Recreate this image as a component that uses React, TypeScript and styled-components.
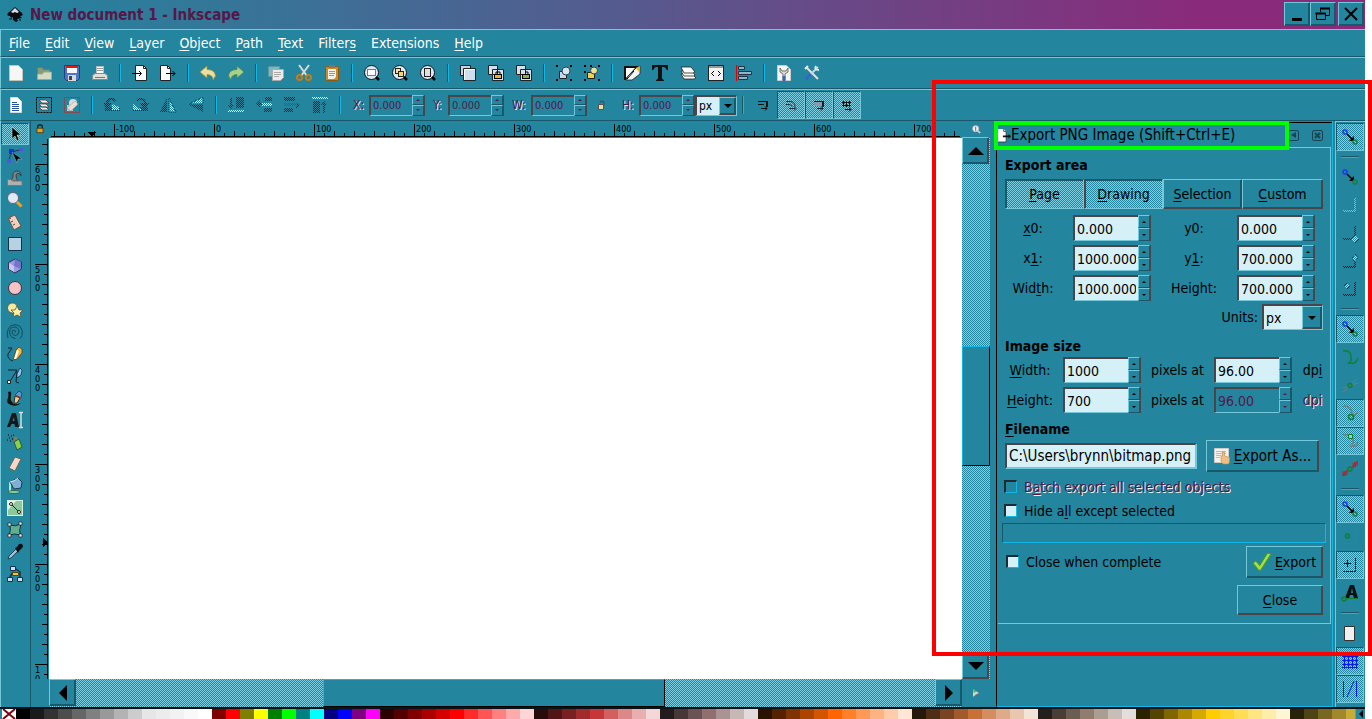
import React, { useId, useLayoutEffect, useRef, useState } from 'react';
import type { ReactNode } from 'react';
import styled, { createGlobalStyle, css } from 'styled-components';

const c = {
  base: '#23859e',
  light: '#74c8da',
  dark: '#185868',
  shade: '#48464a',
  cyan: '#16b6e4',
  field: '#d6f0f7',
  plum: '#551848',
};

const GlobalStyle = createGlobalStyle`
  *, *::before, *::after { box-sizing: border-box; }
  body {
    margin: 0;
    background: #fff;
    color: #000;
    font: 14px/18px "DejaVu Sans Condensed", "DejaVu Sans", Tahoma, sans-serif;
  }
  button, input, select { font: inherit; color: inherit; }
  button { margin: 0; padding: 0; border: 0; background: none; }
  svg { display: block; }
  u { text-decoration: underline; text-underline-offset: 2px; text-decoration-thickness: 1px; }
`;

const stipple = css`
  background: repeating-conic-gradient(${c.base} 0 25%, #7fd0e2 0 50%) 0 0 / 2px 2px;
`;
const raised = css`
  border: 1px solid;
  border-color: ${c.light} ${c.shade} ${c.shade} ${c.light};
  background: ${c.base};
  box-shadow: inset -1px -1px 0 ${c.dark};
`;
const sunken = css`
  border: 1px solid;
  border-color: ${c.dark} ${c.light} ${c.light} ${c.dark};
`;

/* ---------- icons ---------- */

const K = '#222';
const cream = '#f0e8c8';
const icons: Record<string, ReactNode> = {
  logo: (
    <>
      <path d="M8 0 1 6Q-1 9 3 9l1 2 2-1v3l3 2 2-1-1-2 5-1-2-2q4 0 2-3z" fill="#0c0c10" />
      <path d="M8 1 4 5l2 1 2-1 2 1 2-1z" fill="#d5dee6" />
      <path d="M2 12h3M12 13h2" stroke="#111" />
    </>
  ),
  page: <path d="M1.500.5h9l4 4v11h-13z" fill="#f6f6f4" stroke="#c4c4bc" />,
  folder: (
    <>
      <path d="M1.500 13.500v-11h5l1 2h6v3" fill="#8b9a74" stroke="#6f7d5c" />
      <path d="M1.500 14.500V9h5l1-2h8v7.500z" fill="#d5dbc4" stroke="#9caa86" />
    </>
  ),
  save: (
    <>
      <path d="M.5.5h15v13l-2 2h-11l-2-2z" fill="#4a76c4" stroke="#24407c" />
      <path d="M3 1h10v7H3z" fill="#f7f7f7" />
      <path d="M2 1h12v2H2z" fill="#e01818" />
      <path d="M4 10h8v6H4z" fill="#d8d8d8" />
      <path d="M5 11h3v4H5z" fill="#345" />
    </>
  ),
  print: (
    <>
      <path d="M4.500 8V1.500h7V8" fill="#fafafa" stroke="#bbb" />
      <path d="M5 3.500h6M5 5.500h6" stroke="#999" />
      <path d="M.5 10.500 3 8.500h10l2.500 2v4H.5z" fill="#dededa" stroke="#8a8a86" />
      <path d="M3 12.500h10" stroke="#777" />
    </>
  ),
  importDoc: (
    <>
      <path d="M3.500.5h8l3 3v12h-11z" fill="#fff" stroke={K} />
      <path d="M11.500.5v3h3" fill="none" stroke={K} />
      <path d="M0 8.500h9M7 6l2.500 2.500L7 11" fill="none" stroke="#000" />
    </>
  ),
  exportDoc: (
    <>
      <path d="M.5.5h7l3 3v12H.5z" fill="#fff" stroke={K} />
      <path d="M7.500.5v3h3" fill="none" stroke={K} />
      <path d="M6 8.500h9M12.500 6 15 8.500 12.500 11" fill="none" stroke="#000" />
    </>
  ),
  dockExport: (
    <>
      <path d="M0 0h7l3 3v13H0z" fill="#fff" />
      <path d="M7 0v3h3v13H0" fill="none" stroke="#333" />
      <path d="M6 8h7v-2l3 3-3 3v-2H6z" fill="#111" />
    </>
  ),
  undo: <path d="M0 7 7 1v3.500q8 0 8.500 6.500L13 15q.5-5-6-5.500V13z" fill="#eadf9c" stroke="#a09040" strokeWidth=".8" />,
  redo: <path d="M16 7 9 1v3.500q-8 0-8.500 6.500L3 15q-.5-5 6-5.500V13z" fill="#a9cf8c" stroke="#4f8a4a" strokeWidth=".8" />,
  copy: (
    <>
      <path d="M.5 1.500h11v10H.5z" fill="#7fb6c0" stroke="#5a97a4" />
      <path d="M4.500 4.500h11v8l-3 3h-8z" fill="#ecebe6" stroke="#aaa" />
      <path d="M6 7.500h7M6 9.500h7M6 11.500h5" stroke="#aaa" />
    </>
  ),
  cut: (
    <>
      <path d="M3 0 11 11M13 0 5 11" stroke="#d9d9d6" strokeWidth="2" />
      <circle cx="3.500" cy="12.500" r="2.500" fill="none" stroke="#c77b10" strokeWidth="2" />
      <circle cx="12.500" cy="12.500" r="2.500" fill="none" stroke="#c77b10" strokeWidth="2" />
    </>
  ),
  paste: (
    <>
      <rect x="1.500" y="1.500" width="13" height="14" rx="1" fill="#c88a28" stroke="#8a5a10" />
      <path d="M4 4h8v8l-2 2H4z" fill="#f1f1ec" />
      <path d="M5 6.500h6M5 8.500h6M5 10.500h5" stroke="#999" />
      <path d="M5 0h6v3H5z" fill="#777" />
    </>
  ),
  zoomSel: (
    <>
      <circle cx="7.500" cy="7.500" r="7" fill="#dfe9f3" stroke="#111" />
      <path d="M12 12l3 3" stroke="#000" strokeWidth="2.500" />
      <rect x="3.500" y="4.500" width="8" height="6" fill="#fff" stroke="#000" strokeDasharray="1 1" />
    </>
  ),
  zoomDraw: (
    <>
      <circle cx="7.500" cy="7.500" r="7" fill="#dfe9f3" stroke="#111" />
      <path d="M12 12l3 3" stroke="#000" strokeWidth="2.500" />
      <rect x="3.500" y="3.500" width="5" height="5" fill="#f6e6a0" stroke={K} />
      <rect x="6.500" y="6.500" width="5" height="5" fill="#f6d66a" stroke={K} />
    </>
  ),
  zoomPage: (
    <>
      <circle cx="7.500" cy="7.500" r="7" fill="#dfe9f3" stroke="#111" />
      <path d="M12 12l3 3" stroke="#000" strokeWidth="2.500" />
      <rect x="4.500" y="3.500" width="6" height="8" fill="#e0e0e0" stroke={K} />
    </>
  ),
  dup: (
    <>
      <path d="M.5.5h10v10H.5z" fill="#c6d4e4" stroke={K} />
      <path d="M3.500 3.500h12v12h-12z" fill="#cfddec" stroke={K} />
      <path d="M4.500 15V4.500H15" fill="none" stroke="#fff" />
    </>
  ),
  clone: (
    <>
      <path d="M.5.5h9v9h-9zM4.500 4.500h11v11h-11z" fill="#d5e0ec" stroke={K} />
      <rect x="6.500" y="9.500" width="7" height="4" fill="#f0b030" stroke="#000" />
      <path d="M8 9V7h4v2" fill="none" stroke="#000" />
    </>
  ),
  unclone: (
    <>
      <path d="M.5.5h9v9h-9zM4.500 4.500h11v11h-11z" fill="#d5e0ec" stroke={K} />
      <rect x="6.500" y="9.500" width="7" height="4" fill="#8ab04a" stroke="#000" />
      <path d="M9 7h3v2" fill="none" stroke="#000" />
    </>
  ),
  group: (
    <>
      <path d="M0 0h2v2H0zM14 0h2v2h-2zM0 14h2v2H0zM14 14h2v2h-2z" />
      <path d="M3.500 6.500h7v7h-7z" fill="#c8d8ea" stroke={K} />
      <circle cx="10" cy="6" r="4" fill="#d8e4f0" stroke="#345" />
    </>
  ),
  ungroup: (
    <>
      <path d="M0 0h2v2H0zM14 0h2v2h-2zM0 14h2v2H0zM14 14h2v2h-2zM0 6h2v2H0zM6 0h2v2H6z" />
      <path d="M3.500 7.500h7v6h-7z" fill="#f2d24a" stroke={K} />
      <circle cx="10" cy="5.500" r="3.500" fill="#eadf9c" stroke="#345" />
    </>
  ),
  fill: (
    <>
      <path d="M0 1h16L5 15H0z" fill="#111" />
      <path d="M2 3h9L2 13z" fill="#fff" />
      <path d="M16 1v8l-8 6H2l2-4 8-8z" fill="#f4f4f4" stroke="#222" strokeWidth=".8" />
      <path d="M12 3l3 4 1-6z" fill="#f0b020" />
      <path d="M3 14l7-8" stroke="#000" />
    </>
  ),
  text: <path d="M0 0h16v5h-1.500Q14 2 11 2h-1v11q0 1.500 2 2v1H4v-1q2-.5 2-2V2H5Q2 2 1.500 5H0z" fill="#111" />,
  layers: (
    <>
      <path d="M1 9h11l4 4-2 1H4z" fill="#fff" stroke={K} strokeWidth=".8" />
      <path d="M1 6h11l3 4-1 1H4z" fill="#fff" stroke={K} strokeWidth=".8" />
      <path d="M1 2h10l4 5-2 1H4z" fill="#fff" stroke={K} strokeWidth=".8" />
    </>
  ),
  xml: (
    <>
      <rect x=".5" y=".5" width="15" height="15" fill="#f2f2f2" stroke={K} />
      <path d="M1 2h14" stroke="#999" strokeWidth="2" />
      <path d="M6 6 3.500 8.500 6 11M10 6l2.500 2.500L10 11" fill="none" stroke="#000" />
    </>
  ),
  align: (
    <>
      <path d="M.5 0v16" stroke="#e00000" />
      <path d="M2.500 1.500h6v3h-6zM2.500 6.500h13v3h-13zM2.500 11.500h9v3h-9z" fill="#8fb4cc" stroke="#234" />
    </>
  ),
  prefsDoc: (
    <>
      <path d="M1.500.5h9l4 4v11h-13z" fill="#f6f6f4" stroke="#ccc" />
      <path d="M4 3v4l3 2v6h2V9l3-2V3l-2 3H6z" fill="#ddd" stroke="#555" strokeWidth=".8" />
      <path d="M6.500 11h3v5h-3z" fill="#3a66b8" />
    </>
  ),
  prefs: (
    <>
      <path d="M2 2l12 12" stroke="#e2e2de" strokeWidth="2" />
      <path d="M14 2 3 13" stroke="#c9d3de" strokeWidth="2" />
      <path d="M1 4l3-3M12 1q-2 4 3 4" stroke="#e8e8e4" strokeWidth="2" fill="none" />
      <path d="M7 9 2 14" stroke="#2f68c4" strokeWidth="3" />
    </>
  ),
  selAll: (
    <>
      <path d="M2.500.5h7l4 4v11h-11z" fill="#fff" stroke="#cdd" />
      <path d="M4 5.500h5M4 7.500h7M4 9.500h7M4 11.500h7M4 13.500h7" stroke="#2a50a0" />
    </>
  ),
  selLayers: (
    <>
      <rect x=".5" y=".5" width="15" height="15" fill="none" stroke="#000" strokeDasharray="2 1" />
      <path d="M3 3h7l3 3H6zM3 7h7l3 3H6zM3 10h7l3 3H6z" fill="#f0f0f0" stroke="#444" strokeWidth=".8" />
    </>
  ),
  deselect: (
    <>
      <rect x=".5" y=".5" width="15" height="15" fill="none" stroke="#a33" strokeDasharray="2 1" />
      <path d="M3 8h6v6H3z" fill="#b8c8d8" />
      <circle cx="9" cy="6" r="4" fill="#d5dce2" />
      <path d="M3 11l8-7 3 3-7 7z" fill="#f0dccc" stroke="#998" strokeWidth=".5" />
    </>
  ),
  rotL: (
    <>
      <path d="M3 10V5q2-4 6-3l2 2M1 7h5l-3 4z" fill="none" stroke="#111" strokeWidth="2" />
      <path d="M0 14h16v-4H2z" fill="#222" />
      <path d="M8 13V7l7 3v3z" fill={cream} />
    </>
  ),
  rotR: (
    <>
      <path d="M13 10V5q-2-4-6-3L5 4M10 7h5l-3 4z" fill="none" stroke="#111" strokeWidth="2" />
      <path d="M0 14h16v-4H2z" fill="#222" />
      <path d="M1 13V7l9 6z" fill={cream} />
    </>
  ),
  flipH: (
    <>
      <path d="M7 1v14H0z" fill="#222" />
      <path d="M9 1v14h7z" fill={cream} stroke="#222" />
    </>
  ),
  flipV: (
    <>
      <path d="M15 0v7H1z" fill={cream} stroke="#222" />
      <path d="M15 15V8H1z" fill="#222" />
    </>
  ),
  toBottom: (
    <>
      <path d="M8 0h8v11H8zM2 1h2v8H2zM0 8h6l-3 4z" fill="#222" />
      <path d="M0 13h16v2H0z" fill={cream} />
    </>
  ),
  lower: (
    <>
      <path d="M9 0h7v4H9zM8 11h8v4H8zM3 6h6v2H3zM4 3v8L0 7z" fill="#222" />
      <path d="M6 6h10v3H6z" fill={cream} />
    </>
  ),
  raise: (
    <>
      <path d="M0 0h11v4H0zM0 11h9v4H0zM12 5l4 3-4 4z" fill="#222" />
      <path d="M0 6h13v3H0z" fill="#556" />
    </>
  ),
  toTop: (
    <>
      <path d="M1 4h7v12H1zM11 6h2v10h-2zM9 8l3-4 3 4z" fill="#222" />
      <path d="M0 0h16v2H0z" fill={cream} />
    </>
  ),
  lockOpen: (
    <>
      <path d="M7 6q0-2 2-2t2 2v2" fill="none" stroke="#444" />
      <rect x="5.500" y="7.500" width="5" height="5" fill="#e8e0a0" stroke="#555" />
    </>
  ),
  lock: (
    <>
      <path d="M5 7V5q0-2.500 3-2.500T11 5v2" fill="none" stroke="#111" strokeWidth="1.500" />
      <rect x="4" y="7" width="8" height="6" fill="#e8a41c" stroke="#4a3000" />
    </>
  ),
  stroke: (
    <>
      <path d="M3 4.500h9M3 7.500h6M6 11.500h6M10 9.500l2 2-2 2" fill="none" stroke="#111" />
      <path d="M12 4v6" stroke="#111" strokeWidth="2" />
    </>
  ),
  corner: <path d="M3 4.500h4q5 0 5 5M3 7.500h3q2 0 3 2M6 11.500h6M11 9.500l2 2-2 2" fill="none" stroke="#234" />,
  gradMove: (
    <>
      <path d="M3 5h8v4H3z" fill="#8a9aa8" />
      <path d="M3 4.500h9M6 11.500h6M10 9.500l2 2-2 2" fill="none" stroke="#123" />
      <path d="M12 4v6" stroke="#123" strokeWidth="2" />
    </>
  ),
  pattMove: <path d="M3 5.500h9M3 8.500h9M4.500 4v6M7.500 4v6M10.500 4v6M6 12.500h6M10 10.500l2 2-2 2" fill="none" stroke="#111" />,
  arrow: <path d="M5 1v12l3-3 2 5 2-1-2-5h4z" fill="#000" stroke="#cfe" strokeWidth=".5" />,
  node: (
    <>
      <path d="M2 12Q3 2 14 2" fill="none" stroke="#235" />
      <path d="M0 11h4v4H0zM12 0h4v3h-4z" fill="#4a58d8" />
      <path d="M2 1h5v5H2z" fill="#1030e0" />
      <path d="M5 4l10 7-4 0-1 4z" fill="#000" stroke="#9bd" strokeWidth=".5" />
    </>
  ),
  tweak: (
    <>
      <path d="M1 11q4 0 5-4-1-6 4-6 4 0 4 5l-1-2q-3-2-4 1 0 4 2 6z" fill="#7c8488" stroke="#333" strokeWidth=".8" />
      <path d="M.5 9.500h3L6 11h9v4.500H.5z" fill="#b0b0b0" stroke="#777" />
    </>
  ),
  zoom: (
    <>
      <path d="M9.500 9.500l5 5" stroke="#f0a020" strokeWidth="3" />
      <circle cx="6" cy="6" r="5.500" fill="#dfeaf6" stroke="#667" />
    </>
  ),
  magnifier: (
    <>
      <path d="M9.500 9.500l5 5" stroke="#c8c8c8" strokeWidth="3" />
      <circle cx="6.500" cy="6.500" r="5.500" fill="#f4f4f4" stroke="#aab" />
      <path d="M6.500 3v7" stroke="#678" strokeWidth="2" />
    </>
  ),
  measure: (
    <>
      <path d="M1 4l7-3 6 11-7 4z" fill="#f2cfc0" stroke="#654" />
      <path d="M2 5l2-1M4 8l2-1M6 11l2-1" stroke="#543" />
    </>
  ),
  rect: <rect x="1.500" y="1.500" width="13" height="13" fill="#b8d0e4" stroke="#134" />,
  box: (
    <>
      <path d="M1.500 4.500 8 1l6.500 3v7L8 15l-6.500-4z" fill="#9a9ae0" stroke="#335" />
      <path d="M2 5l5 3v6l-5-3z" fill="#c8c8f4" />
      <path d="M8 1 7 8l7 3V4z" fill="#7474cc" />
    </>
  ),
  circle: <circle cx="8" cy="8" r="6.500" fill="#f9c2c6" stroke="#433" />,
  star: (
    <>
      <circle cx="5.500" cy="6" r="5" fill="#f6eaa0" stroke="#554" strokeWidth=".8" />
      <path d="M10 4l2 4h4l-3 3 1 4-4-2-4 2 1-4-3-3h4z" fill="#fbf1a8" stroke="#554" strokeWidth=".8" />
    </>
  ),
  spiral: (
    <path
      d="M8 8.500q1.500-1.500-.5-2.500-3 0-2.500 3 1 2.500 3.500 2.500 3.500-.5 3.500-4Q11 3 7.500 3 3 3 2.500 8 3 14 8.500 14.500M1 14Q-1 7 3 2.500 8-1 13 2.500q3.500 4 2 9L13 14.500"
      fill="none"
      stroke="#124a5a"
    />
  ),
  pencil: (
    <>
      <path d="M1 2h4L1 8q-1 5 5 7" fill="none" stroke="#123" />
      <path d="M7 11 9 4l3-3 3 2 0 4-5 6-3 1z" fill="#f6b63a" stroke="#542" strokeWidth=".8" />
      <path d="M7 13l3-9 2 1-3 8z" fill="#fff" />
    </>
  ),
  pen: (
    <>
      <path d="M1 2h9L4 12q-2 3-3 0M10 3 9 14l3 1" fill="none" stroke="#123" />
      <path d="M10 6l3-6 2 2-1 5-4 3z" fill="#8fc8e8" stroke="#124" strokeWidth=".7" />
      <path d="M.5 12.500h3v3h-3z" fill="#fff" stroke="#222" />
    </>
  ),
  calli: (
    <>
      <path d="M1 2q4-2 3 3t1 7q2 4 9 1-4 4-10 2T1 8Q2 5 1 2z" fill="#111" />
      <path d="M7 13 8 6l5 2-3 5z" fill="#f0d080" stroke="#111" strokeWidth=".8" />
      <path d="M8 5l4-4 3 2-1 5z" fill="#5a9ac8" stroke="#124" strokeWidth=".6" />
      <path d="M8 5l6 3" stroke="#d22" />
    </>
  ),
  textTool: (
    <>
      <path d="M5 1h4l3 14H8l-.5-3h-3L3 15H0zM5.500 9h2L7 5z" fill="#181818" />
      <path d="M12 .5h4M12 15.500h4M14 1v14" stroke="#ddd" strokeWidth="1.500" />
    </>
  ),
  spray: (
    <>
      <path d="M1 1h1M4 2h1M2 4h1M5 5h1M0 6h1M6 1h1M3 7h1" stroke="#123" strokeWidth="1.500" />
      <path d="M7 8l5-3 3 8-5 3z" fill="#8cd04a" stroke="#243" strokeWidth=".8" />
      <path d="M7 7V3l3 0 1 2z" fill="#8a7a50" />
    </>
  ),
  eraser: <path d="M8 1l6 2-6 12-6-3z" fill="#f6d8c8" stroke="#665" />,
  bucket: (
    <>
      <path d="M3 4v9" stroke="#9cf0c8" strokeWidth="2" />
      <ellipse cx="7" cy="14" rx="6" ry="1.500" fill="#8bd0a0" stroke="#243" strokeWidth=".6" />
      <path d="M3 4l8-4 4 4-1 6-7 1z" fill="#7fb0d4" stroke="#124" strokeWidth=".8" />
      <path d="M3 4q5-1 8-4" fill="none" stroke="#def" />
    </>
  ),
  gradient: (
    <>
      <rect x=".5" y=".5" width="15" height="15" fill="#8cc89c" stroke="#d8f0d8" />
      <path d="M1 1h8L1 10z" fill="#e8f6e8" />
      <path d="M4 4l8 8" stroke="#222" />
      <circle cx="4" cy="4" r="1.500" fill="#fff" stroke="#222" />
      <circle cx="12" cy="12" r="1.500" fill="#fff" stroke="#222" />
    </>
  ),
  mesh: (
    <>
      <path d="M3 3q5 2 11-1-2 6-1 11-5-2-11 0 2-4 1-10z" fill="#5fae8c" stroke="#134" />
      <path d="M1 1h3v3H1zM12 0h3v3h-3zM1 12h3v3H1zM12 12h3v3h-3z" fill="#eee" stroke="#222" strokeWidth=".7" />
    </>
  ),
  dropper: (
    <>
      <path d="M1 15l1-3 7-7 2 2-7 7z" fill="#9cc4dc" stroke="#123" strokeWidth=".7" />
      <path d="M8 4l2-1 2-3q4-1 4 3l-4 4-1 2z" fill="#111" />
    </>
  ),
  connector: (
    <>
      <path d="M6 6 3 11M9 3l4 3v5" stroke="#134" strokeWidth="1.500" fill="none" />
      <path d="M3.500.5h5v4h-5zM.5 11.500h5v4h-5zM10.500 11.500h5v4h-5z" fill="#cfe0ee" stroke="#135" />
      <path d="M5.500 6.500h6v3h-6z" fill="#f4c430" stroke="#542" />
    </>
  ),
  snap: (
    <>
      <path d="M5 5l5 5" stroke="#000" strokeWidth="1.500" />
      <path d="M12 7v5H7z" fill="#000" />
      <circle cx="3" cy="3" r="2" fill="none" stroke="#1a3af0" strokeWidth="1.500" />
      <circle cx="13" cy="13" r="2" fill="none" stroke="#128040" strokeWidth="1.500" />
    </>
  ),
  bbox: <path d="M13 1v13H1" fill="none" stroke="#b0b07c" strokeWidth="2" />,
  bboxEdge: (
    <>
      <path d="M13 1v13H1" fill="none" stroke="#222" strokeWidth="2" />
      <path d="M13 10l4 4-4 4-4-4z" fill="#d8d8a0" stroke="#222" />
    </>
  ),
  bboxMid: (
    <>
      <path d="M13 1v13H1" fill="none" stroke="#111" strokeWidth="2" />
      <path d="M13 1l3 4-3 4-3-4z" fill="#c8d8a0" stroke="#222" />
    </>
  ),
  bboxCtr: (
    <>
      <path d="M13 1v13H1" fill="none" stroke="#111" strokeWidth="2" />
      <path d="M5 2l3 3-3 3-3-3z" fill="#c8d8a0" stroke="#222" />
    </>
  ),
  curve: <path d="M1 2q7-1 8 5t-2 7q7 2 9-5" fill="none" stroke="#128030" strokeWidth="1.500" />,
  cross: (
    <>
      <path d="M1 15 15 2M1 11l15-5" stroke="#6f7d7c" />
      <circle cx="8" cy="8.500" r="2" fill={c.base} stroke="#128030" strokeWidth="1.500" />
    </>
  ),
  cusp: (
    <>
      <path d="M1 1q9-1 9 9 3 2 5-3" fill="none" stroke="#6f8080" strokeWidth="1.500" />
      <circle cx="9" cy="12" r="2.500" fill="none" stroke="#128030" strokeWidth="1.500" />
    </>
  ),
  smooth: (
    <>
      <path d="M1 2q9-1 10 4t-2 7q6 1 7-4" fill="none" stroke="#6f8080" strokeWidth="1.500" />
      <path d="M6.500 1.500h4v4h-4z" fill="#7fd0e2" stroke="#128030" />
    </>
  ),
  midline: (
    <>
      <path d="M1 10v5l2-5v5l2-6v5M11 2v5l2-6v5l2-6v5" fill="none" stroke="#b0202c" />
      <circle cx="8" cy="8" r="2" fill="none" stroke="#128030" strokeWidth="1.500" />
    </>
  ),
  objCtr: (
    <>
      <path d="M13.500 3v11.500H1" fill="none" stroke="#6a6f74" />
      <circle cx="5.500" cy="7" r="2" fill="none" stroke="#128030" strokeWidth="1.500" />
    </>
  ),
  rotCtr: (
    <>
      <path d="M5.500 3v7M2 6.500h7" stroke="#111" />
      <path d="M13.500 1v13.500H1" fill="none" stroke="#111" strokeDasharray="3 1" />
    </>
  ),
  textSnap: (
    <>
      <path d="M8 0h4l4 13h-4l-1-3H8l-1 3H3zM9 8h2l-1-5z" fill="#111" />
      <path d="M4 13.500h12" stroke="#128030" />
      <circle cx="2" cy="14" r="2" fill="none" stroke="#128030" strokeWidth="1.500" />
    </>
  ),
  pageSnap: <path d="M2.500 1.500h10v14h-10z" fill="#f0f0f0" stroke="#333" />,
  gridSnap: <path d="M0 3.500h16M0 7.500h16M0 11.500h16M2.500 0v16M6.500 0v16M10.500 0v16M14.500 0v16M0 14.500h16" stroke="#0818f0" />,
  guideSnap: <path d="M1.500 0v16M14.500 0v16M5 16l7-16" stroke="#0818f0" />,
  cms: (
    <>
      <path d="M4 3l8 5-8 5z" fill="#d8d8d0" />
      <path d="M4 3l5 3-4 2z" fill="#50b850" />
      <path d="M5 12l4-3 2 0z" fill="#c04858" />
    </>
  ),
  exportAs: (
    <>
      <path d="M.5.5h14v14H.5z" fill="#f4f2ec" stroke="#ccc" />
      <path d="M2 3.500h10M2 5.500h10M2 7.500h5M2 9.500h4" stroke="#bbb" />
      <path d="M7 9q0-2 1.500-1V4h2v4l5 1.500V14l-1 2H9l-2-3z" fill="#f0be80" stroke="#c08a48" strokeWidth=".6" />
    </>
  ),
  check: <path d="M0 9 2.500 7 6 11 13 0l3 1L7 15q-2 1-3-1z" fill="#a4e04c" stroke="#4c9a1c" strokeWidth=".9" />,
};

function Icon({ name, size = 16, faded }: { name: string; size?: number; faded?: boolean }) {
  const id = useId();
  return (
    <svg width={size} height={size} viewBox="0 0 16 16" overflow="visible" aria-hidden="true">
      {faded && (
        <defs>
          <pattern id={id + 'p'} width="2" height="2" patternUnits="userSpaceOnUse">
            <path d="M0 0h1v1H0zM1 1h1v1H1z" fill="#fff" shapeRendering="crispEdges" />
          </pattern>
          <mask id={id + 'm'}>
            <rect width="18" height="18" fill={`url(#${id}p)`} />
          </mask>
        </defs>
      )}
      <g mask={faded ? `url(#${id}m)` : undefined}>{icons[name]}</g>
    </svg>
  );
}

/** Renders a caption in which "_" marks the mnemonic letter. */
function Caption({ text }: { text: string }) {
  const at = text.indexOf('_');
  if (at < 0) return <>{text}</>;
  return (
    <span>
      {text.slice(0, at)}
      <u>{text[at + 1]}</u>
      {text.slice(at + 2)}
    </span>
  );
}

/* ---------- frame ---------- */

const Page = styled.div`
  position: relative;
  height: 100vh;
  min-height: 600px;
  overflow: hidden;
`;
const Shell = styled.div`
  display: flex;
  flex-direction: column;
  height: 100%;
  margin-right: 7px;
  background: ${c.base};
`;
const TitleBar = styled.header`
  display: flex;
  align-items: center;
  flex: none;
  height: 29px;
  padding: 0 1px 0 7px;
  gap: 7px;
  background: linear-gradient(90deg, #23859e, #565a8e 46%, #8a2a7a 88%);
`;
const Title = styled.h1`
  flex: 1;
  margin: 0;
  font-size: 15px;
  line-height: 18px;
  color: ${c.plum};
`;
const WindowButtons = styled.div`
  display: flex;
  align-self: flex-start;
  padding-top: 2px;
`;
const WindowButton = styled.button<{ $apart?: boolean }>`
  ${raised}
  display: grid;
  place-items: center;
  width: 26px;
  height: 24px;
  margin-left: ${(p) => (p.$apart ? 2 : 0)}px;
`;
const Bar = styled.div<{ $height: number }>`
  display: flex;
  align-items: center;
  flex: none;
  height: ${(p) => p.$height}px;
  padding-left: 1px;
  border: solid ${c.light};
  border-width: 1px 0 0 1px;
  border-bottom: 1px solid ${c.dark};
`;
const MenuBar = styled(Bar).attrs({ as: 'nav', $height: 28 })`
  padding-left: 8px;
  gap: 15px;
  color: #fff;
`;
const ToolButton = styled.button<{ $on?: boolean; $h?: number; $w?: number }>`
  display: grid;
  place-items: center;
  flex: none;
  width: ${(p) => p.$w ?? 28}px;
  height: ${(p) => p.$h ?? 28}px;
  ${(p) => p.$on && stipple}
  ${(p) => p.$on && sunken}
`;
const Divider = styled.span`
  flex: none;
  width: 2px;
  height: 18px;
  margin: 0 5px;
  border-left: 1px solid ${c.dark};
  border-right: 1px solid ${c.cyan};
`;

/* ---------- form parts ---------- */

const etched = css`
  color: ${c.plum};
  text-shadow: 1px 1px 0 #e8f2f4;
`;
const FieldLabel = styled.label<{ $off?: boolean; $small?: boolean }>`
  white-space: nowrap;
  ${(p) => p.$off && etched}
  ${(p) => p.$small && 'font-size: 12px;'}
`;
const SpinBox = styled.span<{ $small?: boolean }>`
  display: flex;
  flex: none;
  width: ${(p) => (p.$small ? 56 : 78)}px;
  height: ${(p) => (p.$small ? 21 : 26)}px;
`;
const Field = styled.input<{ $small?: boolean }>`
  flex: 1;
  min-width: 0;
  height: 100%;
  padding: 0 2px;
  border: solid;
  border-width: 2px 0 1px 2px;
  border-color: ${c.shade} ${c.light} ${c.light} ${c.shade};
  border-radius: 0;
  outline: 0;
  background: ${c.field};
  font-size: ${(p) => (p.$small ? 11 : 14)}px;
  &:disabled { background: transparent; color: ${c.plum}; }
`;
const PathField = styled(Field)`
  flex: none;
  width: 192px;
  height: 26px;
  border-width: 2px;
  font-size: 15px;
`;
const Steps = styled.span`
  display: flex;
  flex-direction: column;
  width: 13px;
  border-right: 1px solid ${c.shade};
`;
const Step = styled.button`
  flex: 1;
  display: grid;
  place-items: center;
  border: 1px solid;
  border-color: ${c.light} ${c.dark} ${c.dark} ${c.light};
  color: #000;
  &:disabled { color: ${c.plum}; }
`;

function Spin(p: { id: string; value: string; small?: boolean; off?: boolean }) {
  const [value, setValue] = useState(p.value);
  return (
    <SpinBox $small={p.small}>
      <Field id={p.id} value={value} disabled={p.off} $small={p.small} onChange={(e) => setValue(e.target.value)} />
      <Steps>
        <Step type="button" aria-label="Increase" disabled={p.off}>
          <svg width="4" height="2"><path d="M0 2 2 0l2 2z" fill="currentColor" /></svg>
        </Step>
        <Step type="button" aria-label="Decrease" disabled={p.off}>
          <svg width="4" height="2"><path d="M0 0h4L2 2z" fill="currentColor" /></svg>
        </Step>
      </Steps>
    </SpinBox>
  );
}

const Drop = styled.span<{ $small?: boolean }>`
  display: grid;
  grid-template-columns: 1fr ${(p) => (p.$small ? 17 : 20)}px;
  flex: none;
  width: ${(p) => (p.$small ? 42 : 61)}px;
  height: ${(p) => (p.$small ? 21 : 26)}px;
  border: solid;
  border-width: 2px 1px 1px 2px;
  border-color: ${c.shade} ${c.light} ${c.light} ${c.shade};
  background: ${c.field};
  select {
    grid-area: 1 / 1 / 2 / 3;
    appearance: none;
    width: 100%;
    padding: 0 2px;
    border: 0;
    outline: 0;
    background: transparent;
    font-size: ${(p) => (p.$small ? 12 : 14)}px;
  }
`;
const DropArrow = styled.span`
  ${raised}
  grid-area: 1 / 2 / 2 / 3;
  display: grid;
  place-items: center;
  pointer-events: none;
`;
function UnitSelect({ id, small, label }: { id: string; small?: boolean; label?: string }) {
  return (
    <Drop $small={small}>
      <select id={id} aria-label={label} defaultValue="px">
        <option>px</option>
        <option>mm</option>
        <option>in</option>
      </select>
      <DropArrow>
        <svg width="8" height="4"><path d="M0 0h8L4 4z" /></svg>
      </DropArrow>
    </Drop>
  );
}

const PushButton = styled.button<{ $w: number; $h?: number; $large?: boolean }>`
  ${raised}
  display: flex;
  align-items: center;
  justify-content: center;
  gap: 4px;
  flex: none;
  width: ${(p) => p.$w}px;
  height: ${(p) => p.$h ?? 32}px;
  font-size: ${(p) => (p.$large ? 15 : 14)}px;
  white-space: nowrap;
`;

/* ---------- workspace ---------- */

const Body = styled.main`
  display: flex;
  flex: 1;
  min-height: 0;
`;
const Toolbox = styled.div`
  flex: none;
  width: 31px;
  padding: 2px 0 0;
  border-left: 1px solid ${c.light};
  border-right: 1px solid ${c.dark};
`;
const DocumentArea = styled.section`
  display: grid;
  grid-template: 16px minmax(0, 1fr) 28px / 18px minmax(0, 1fr) 28px;
  flex: 1;
  min-width: 0;
`;
const Corner = styled.div`
  display: grid;
  place-items: center;
`;
const Ruler = styled.div`
  overflow: hidden;
  font-size: 9px;
`;
const Canvas = styled.div`
  border-top: 1px solid ${c.base};
  background: #fff;
`;
const Scroll = styled.div<{ $vertical?: boolean }>`
  display: flex;
  flex-direction: ${(p) => (p.$vertical ? 'column' : 'row')};
  ${(p) => (p.$vertical ? '' : 'grid-column: 2;')}
  ${stipple}
`;
const ScrollButton = styled.button`
  ${raised}
  display: grid;
  place-items: center;
  flex: none;
  width: 27px;
  height: 27px;
`;
const Gap = styled.div<{ $grow: number }>`
  flex: ${(p) => p.$grow} 0 0;
`;
const Thumb = styled.div<{ $grow: number }>`
  flex: ${(p) => p.$grow} 0 0;
  border: 1px solid;
  border-color: ${c.cyan} #000 #000 ${c.cyan};
  background: ${c.base};
`;

const tickLength = (n: number) => (n % 10 === 0 ? 12 : n % 2 === 0 ? 5 : 3);

function HorizontalRuler() {
  const ref = useRef<HTMLDivElement>(null);
  const [width, setWidth] = useState(0);
  useLayoutEffect(() => {
    const el = ref.current;
    if (!el) return;
    const measure = () => setWidth(el.clientWidth);
    measure();
    const observer = new ResizeObserver(measure);
    observer.observe(el);
    return () => observer.disconnect();
  }, []);
  const zero = 165;
  const first = -16;
  const count = Math.max(0, Math.floor((width - 8 - zero) / 10) - first + 1);
  const ticks = Array.from({ length: count }, (_, i) => i + first);
  return (
    <Ruler ref={ref}>
      <svg width="100%" height="16" shapeRendering="crispEdges">
        <rect x="2" y="15" width={Math.max(0, width - 4)} height="1" />
        {ticks.map((n) => (
          <rect key={n} x={zero + n * 10} y={15 - tickLength(n)} width="1" height={tickLength(n)} />
        ))}
        {ticks.filter((n) => n % 10 === 0 && zero + n * 10 < width - 20).map((n) => (
          <text key={n} x={zero + 2 + n * 10} y="11">{n * 10}</text>
        ))}
        <path d="M38 11h9l-4 5z" />
      </svg>
    </Ruler>
  );
}

function VerticalRuler() {
  const ticks = Array.from({ length: 120 }, (_, i) => i);
  return (
    <Ruler>
      <svg width="18" height="100%" shapeRendering="crispEdges">
        <path d="M16 2h1v3000h-1z" />
        {ticks.map((n) => (
          <rect key={n} x={16 - tickLength(n - 2)} y={7 + n * 10} width={tickLength(n - 2)} height="1" />
        ))}
        {[600, 500, 400, 300, 200, 100].map((v, row) =>
          String(v).split('').map((d, i) => (
            <text key={v + '-' + i} x="4" y={36 + row * 100 + i * 9}>{d}</text>
          )),
        )}
        <path d="M12 401v9l5-4z" />
      </svg>
    </Ruler>
  );
}

/* ---------- export dock ---------- */

const Dock = styled.aside`
  display: flex;
  flex-direction: column;
  flex: none;
  width: 343px;
  padding: 1px 0 0 6px;
  border-right: 1px solid ${c.cyan};
`;
const DockInner = styled.div`
  flex: 1;
  padding-left: 1px;
  border: solid #000;
  border-width: 1px 0 0 1px;
  border-bottom: 1px solid ${c.cyan};
`;
const DockHeader = styled.div`
  position: relative;
  display: flex;
  align-items: center;
  height: 24px;
  padding-right: 9px;
`;
const DockTitle = styled.h2`
  flex: 1;
  margin: 0;
  font-size: 15px;
  font-weight: normal;
`;
const DockButton = styled.button`
  display: grid;
  place-items: center;
  width: 11px;
  height: 11px;
  margin-left: 13px;
  border: 1px solid #1a4450;
  border-radius: 2px;
`;
const DockForm = styled.form`
  display: flex;
  flex-direction: column;
  height: 477px;
  margin-right: 1px;
  padding: 8px 7px 0;
  border: 1px solid ${c.light};
  border-left: 0;
`;
const Heading = styled.h3<{ $top?: number }>`
  margin: ${(p) => p.$top ?? 0}px 0 0;
  font-size: 14px;
  line-height: 18px;
`;
const AreaTabs = styled.div`
  display: grid;
  grid-template-columns: 79px 79px 79px 81px;
  height: 30px;
  margin: 5px 0 6px;
`;
const AreaTab = styled.button<{ $on?: boolean }>`
  ${raised}
  ${(p) => p.$on && stipple}
  ${(p) => p.$on && css`border-color: ${c.shade} ${c.light} ${c.light} ${c.shade}; box-shadow: inset 1px 1px 0 ${c.dark};`}
`;
const AreaGrid = styled.div`
  display: grid;
  grid-template-columns: 68px 78px 86px 78px;
  row-gap: 4px;
  align-items: center;
  text-align: center;
  label:nth-of-type(odd) { padding-right: 12px; }
`;
const Row = styled.div<{ $top?: number; $gap?: number; $end?: boolean }>`
  display: flex;
  align-items: center;
  justify-content: ${(p) => (p.$end ? 'flex-end' : 'flex-start')};
  gap: ${(p) => p.$gap ?? 0}px;
  margin-top: ${(p) => p.$top ?? 0}px;
`;
const SizeGrid = styled.div`
  display: grid;
  grid-template-columns: 58px 78px 73px 78px 1fr;
  row-gap: 4px;
  align-items: center;
  margin-top: 2px;
  label { text-align: center; }
  label:first-child, label:nth-of-type(3) { padding-right: 8px; }
`;
const Unit = styled.span<{ $off?: boolean; $start?: boolean }>`
  text-align: center;
  padding-left: ${(p) => (p.$start ? 10 : 0)}px;
  white-space: nowrap;
  ${(p) => p.$off && etched}
`;
const Check = styled.label<{ $off?: boolean; $inset?: boolean }>`
  display: flex;
  align-items: center;
  gap: 7px;
  height: 24px;
  padding-left: ${(p) => (p.$inset ? 2 : 0)}px;
  ${(p) => p.$off && etched}
  input {
    appearance: none;
    width: 13px;
    height: 13px;
    margin: 0 0 2px -1px;
    border: 2px solid;
    border-width: 2px 1px 1px 2px;
    border-color: #1b2c33 ${c.cyan} ${c.cyan} #1b2c33;
    background: ${c.field};
  }
  input:disabled { background: transparent; }
`;
const Progress = styled.div`
  height: 20px;
  margin: 0 -3px;
  border: 1px solid;
  border-color: ${c.dark} ${c.cyan} ${c.cyan} ${c.dark};
`;
const Spread = styled(Row)`
  justify-content: space-between;
`;

/* ---------- snap bar and palette ---------- */

const SnapBar = styled.div`
  flex: none;
  width: 30px;
  margin-left: 2px;
  padding-top: 1px;
  border-left: 1px solid ${c.light};
  border-top: 1px solid ${c.light};
`;
const SnapDivider = styled.hr`
  width: 18px;
  height: 2px;
  margin: 5px 5px;
  border: 0;
  border-top: 1px solid ${c.dark};
  border-bottom: 1px solid ${c.cyan};
`;
const Palette = styled.div`
  display: flex;
  flex: none;
  height: 12px;
  padding-left: 2px;
  border-top: 2px solid #0a1418;
`;
const Swatches = styled.div`
  display: flex;
  flex: 1;
  min-width: 0;
  overflow: hidden;
`;
const Swatch = styled.button`
  flex: none;
  width: 14px;
  height: 10px;
`;
const PaletteMenu = styled.button`
  display: grid;
  place-items: center;
  width: 10px;
  border-left: 1px solid ${c.cyan};
`;
const RedFrame = styled.div`
  position: absolute;
  top: 80px;
  right: 0;
  width: 440px;
  height: 576px;
  border: 4px solid #f00;
  pointer-events: none;
`;
const GreenFrame = styled.div`
  position: absolute;
  top: -2px;
  left: -4px;
  width: 295px;
  height: 29px;
  border: 4px solid #0f0;
  pointer-events: none;
`;

/* ---------- data ---------- */

const menus = ['_File', '_Edit', '_View', '_Layer', '_Object', '_Path', '_Text', 'Filter_s', 'Exte_nsions', '_Help'];
const commands =
  'page folder save print | importDoc exportDoc | undo redo | copy cut paste | zoomSel zoomDraw zoomPage | dup clone unclone | group ungroup | fill text layers xml align | prefsDoc prefs'.split(' ');
const selectControls = 'selAll selLayers deselect | rotL rotR flipH flipV | toBottom lower raise toTop |'.split(' ');
const fadedNames = new Set('rotL rotR flipH flipV toBottom lower raise toTop bbox bboxEdge bboxMid bboxCtr'.split(' '));
const tools =
  'arrow node tweak zoom measure rect box circle star spiral pencil pen calli textTool spray eraser bucket gradient mesh dropper connector'.split(' ');
const snaps =
  '+snap | snap bbox bboxEdge bboxMid bboxCtr | +snap curve cross +cusp +smooth midline | +snap objCtr +rotCtr textSnap | pageSnap +gridSnap +guideSnap'.split(' ');
const swatches = (
  '000000 1a1a1a 333333 4d4d4d 666666 808080 999999 b3b3b3 cccccc e6e6e6 ececec f2f2f2 f9f9f9 ffffff ' +
  '800000 ff0000 808000 ffff00 008000 00ff00 008080 00ffff 000080 0000ff 800080 ff00ff ' +
  '2b0000 550000 800000 aa0000 d40000 ff0000 ff2a2a ff5555 ff8080 ffaaaa ffd5d5 ' +
  '280b0b 501616 782121 a02c2c c83737 d35f5f de8787 e9afaf f4d7d7 ' +
  '241c1c 483737 6c5353 916f6f ac9393 c8b7b7 e3dbdb ' +
  '2b1100 552200 803300 aa4400 d45500 ff6600 ff7f2a ff9955 ffb380 ffccaa ffe6d5 ' +
  '28170b 502d16 784421 a05a2c c87137 d38d5f deaa87 e9c6af f4e3d7 ' +
  '241f1c 483e37 6c5d53 917c6f ac9d93 c8beb7 e3dedb ' +
  '2b2200 554400 806600 aa8800 d4aa00 ffcc00 ffd42a ffdd55 ffe680 ffeeaa fff6d5 ' +
  '28220b 504416 786721 a0892c c8ab37 d3bc5f decd87'
).split(' ');

const Coordinate = styled.span<{ $w: number }>`
  display: flex;
  align-items: center;
  justify-content: space-between;
  flex: none;
  width: ${(p) => p.$w}px;
`;
const Coordinates = styled.span`
  display: flex;
  align-items: center;
  gap: 8px;
  margin-left: 7px;
`;

function TopBars() {
  return (
    <>
      <TitleBar>
        <Icon name="logo" />
        <Title>New document 1 - Inkscape</Title>
        <WindowButtons>
          <WindowButton aria-label="Minimize">
            <svg width="12" height="14"><path d="M1 11h10v3H1z" /></svg>
          </WindowButton>
          <WindowButton aria-label="Restore">
            <svg width="16" height="14" fill="none" stroke="#000">
              <path d="M5 1.500h10M.5 6.500h10" strokeWidth="2" />
              <path d="M5.500 5V1.500h9v7H11M1.500 6v6.500h9V6" />
            </svg>
          </WindowButton>
          <WindowButton aria-label="Close window" $apart>
            <svg width="14" height="14"><path d="M1 1l12 12M13 1 1 13" stroke="#000" strokeWidth="2" /></svg>
          </WindowButton>
        </WindowButtons>
      </TitleBar>
      <MenuBar>
        {menus.map((m) => (
          <button key={m}><Caption text={m} /></button>
        ))}
      </MenuBar>
      <Bar $height={32}>
        {commands.map((n, i) =>
          n === '|' ? <Divider key={i} /> : <ToolButton key={i} aria-label={n}><Icon name={n} /></ToolButton>,
        )}
      </Bar>
      <Bar $height={32}>
        {selectControls.map((n, i) =>
          n === '|' ? <Divider key={i} /> : (
            <ToolButton key={i} aria-label={n}><Icon name={n} faded={fadedNames.has(n)} /></ToolButton>
          ),
        )}
        <Coordinates>
          <Coordinate $w={72}>
            <FieldLabel $off $small htmlFor="cx">X:</FieldLabel>
            <Spin id="cx" value="0.000" small off />
          </Coordinate>
          <Coordinate $w={71}>
            <FieldLabel $off $small htmlFor="cy">Y:</FieldLabel>
            <Spin id="cy" value="0.000" small off />
          </Coordinate>
          <Coordinate $w={75}>
            <FieldLabel $off $small htmlFor="cw">W:</FieldLabel>
            <Spin id="cw" value="0.000" small off />
          </Coordinate>
        </Coordinates>
        <ToolButton aria-label="Lock ratio"><Icon name="lockOpen" /></ToolButton>
        <Coordinates>
          <Coordinate $w={73}>
            <FieldLabel $off $small htmlFor="ch">H:</FieldLabel>
            <Spin id="ch" value="0.000" small off />
          </Coordinate>
        </Coordinates>
        <UnitSelect id="cu" small label="Coordinate units" />
        <Divider />
        <ToolButton aria-label="Scale stroke"><Icon name="stroke" /></ToolButton>
        <ToolButton $on aria-label="Scale corners"><Icon name="corner" /></ToolButton>
        <ToolButton $on aria-label="Move gradients"><Icon name="gradMove" /></ToolButton>
        <ToolButton $on aria-label="Move patterns"><Icon name="pattMove" /></ToolButton>
      </Bar>
    </>
  );
}

function ExportDock() {
  return (
    <Dock>
      <DockInner>
        <DockHeader>
          <Icon name="dockExport" size={13} />
          <DockTitle>Export PNG Image (Shift+Ctrl+E)</DockTitle>
          <DockButton aria-label="Iconify dock">
            <svg width="5" height="6"><path d="M5 0v6L0 3z" fill="#1a4450" /></svg>
          </DockButton>
          <DockButton aria-label="Close dock">
            <svg width="7" height="7"><path d="M1 1l5 5M6 1 1 6" stroke="#1a4450" strokeWidth="2" /></svg>
          </DockButton>
          <GreenFrame />
        </DockHeader>
        <DockForm onSubmit={(e) => e.preventDefault()}>
          <Heading>Export area</Heading>
          <AreaTabs>
            <AreaTab type="button" $on><Caption text="_Page" /></AreaTab>
            <AreaTab type="button" $on><Caption text="_Drawing" /></AreaTab>
            <AreaTab type="button"><Caption text="_Selection" /></AreaTab>
            <AreaTab type="button"><Caption text="_Custom" /></AreaTab>
          </AreaTabs>
          <AreaGrid>
            <FieldLabel htmlFor="x0"><Caption text="_x0:" /></FieldLabel>
            <Spin id="x0" value="0.000" />
            <FieldLabel htmlFor="y0">y0:</FieldLabel>
            <Spin id="y0" value="0.000" />
            <FieldLabel htmlFor="x1"><Caption text="x_1:" /></FieldLabel>
            <Spin id="x1" value="1000.000" />
            <FieldLabel htmlFor="y1"><Caption text="y_1:" /></FieldLabel>
            <Spin id="y1" value="700.000" />
            <FieldLabel htmlFor="aw"><Caption text="Wid_th:" /></FieldLabel>
            <Spin id="aw" value="1000.000" />
            <FieldLabel htmlFor="ah">Height:</FieldLabel>
            <Spin id="ah" value="700.000" />
          </AreaGrid>
          <Row $top={3} $gap={4} $end>
            <FieldLabel htmlFor="units">Units:</FieldLabel>
            <UnitSelect id="units" />
          </Row>
          <Heading $top={7}>Image size</Heading>
          <SizeGrid>
            <FieldLabel htmlFor="iw"><Caption text="_Width:" /></FieldLabel>
            <Spin id="iw" value="1000" />
            <Unit>pixels at</Unit>
            <Spin id="dx" value="96.00" />
            <Unit $start as="label" htmlFor="dx"><Caption text="dp_i" /></Unit>
            <FieldLabel htmlFor="ih"><Caption text="_Height:" /></FieldLabel>
            <Spin id="ih" value="700" />
            <Unit>pixels at</Unit>
            <Spin id="dy" value="96.00" off />
            <Unit $start $off as="label" htmlFor="dy">dpi</Unit>
          </SizeGrid>
          <Heading $top={7}>
            <label htmlFor="file"><Caption text="_Filename" /></label>
          </Heading>
          <Row $top={2} $gap={9}>
            <PathField id="file" defaultValue="C:\Users\brynn\bitmap.png" />
            <PushButton type="button" $w={113} $large>
              <Icon name="exportAs" />
              <Caption text="_Export As..." />
            </PushButton>
          </Row>
          <Row $top={3}>
            <Check $off><input type="checkbox" disabled /><Caption text="B_atch export all selected objects" /></Check>
          </Row>
          <Row>
            <Check><input type="checkbox" /><Caption text="Hide a_ll except selected" /></Check>
          </Row>
          <Progress role="progressbar" aria-label="Export progress" />
          <Spread $top={3}>
            <Check $inset><input type="checkbox" />Close when complete</Check>
            <PushButton type="submit" $w={77}>
              <Icon name="check" size={18} />
              <Caption text="_Export" />
            </PushButton>
          </Spread>
          <Row $top={7} $end>
            <PushButton type="button" $w={86} $h={30}><Caption text="_Close" /></PushButton>
          </Row>
        </DockForm>
      </DockInner>
    </Dock>
  );
}

export default function App() {
  return (
    <Page>
      <GlobalStyle />
      <Shell>
        <TopBars />
        <Body>
          <Toolbox>
            {tools.map((n, i) => (
              <ToolButton key={n} aria-label={n} $on={i === 0} $h={22} $w={28}><Icon name={n} /></ToolButton>
            ))}
          </Toolbox>
          <DocumentArea>
            <Corner><Icon name="lock" size={12} /></Corner>
            <HorizontalRuler />
            <Corner><Icon name="magnifier" size={9} /></Corner>
            <VerticalRuler />
            <Canvas />
            <Scroll $vertical>
              <ScrollButton aria-label="Scroll up"><svg width="16" height="8"><path d="M0 8 8 0l8 8z" /></svg></ScrollButton>
              <Gap $grow={183} />
              <Thumb $grow={118} />
              <Gap $grow={187} />
              <ScrollButton aria-label="Scroll down"><svg width="16" height="8"><path d="M0 0h16L8 8z" /></svg></ScrollButton>
            </Scroll>
            <Scroll>
              <ScrollButton aria-label="Scroll left"><svg width="8" height="16"><path d="M8 0v16L0 8z" /></svg></ScrollButton>
              <Gap $grow={247} />
              <Thumb $grow={341} />
              <Gap $grow={270} />
              <ScrollButton aria-label="Scroll right"><svg width="8" height="16"><path d="M0 0l8 8-8 8z" /></svg></ScrollButton>
            </Scroll>
            <Corner><Icon name="cms" size={12} /></Corner>
          </DocumentArea>
          <ExportDock />
          <SnapBar>
            {snaps.map((s, i) => {
              if (s === '|') return <SnapDivider key={i} />;
              const name = s.replace('+', '');
              return (
                <ToolButton key={i} aria-label={name} $on={s[0] === '+'}>
                  <Icon name={name} faded={fadedNames.has(name)} />
                </ToolButton>
              );
            })}
          </SnapBar>
        </Body>
        <Palette>
          <Swatches>
            <Swatch aria-label="No colour">
              <svg width="14" height="10"><path d="M0 0h14v10H0z" fill="#fff" /><path d="M1 0l12 10M13 0 1 10" stroke="#800010" strokeWidth="2" /></svg>
            </Swatch>
            {swatches.map((s, i) => (
              <Swatch key={i} aria-label={'#' + s} style={{ background: '#' + s }} />
            ))}
          </Swatches>
          <PaletteMenu aria-label="Palette menu"><svg width="4" height="8"><path d="M4 0v8L0 4z" /></svg></PaletteMenu>
        </Palette>
      </Shell>
      <RedFrame />
    </Page>
  );
}
